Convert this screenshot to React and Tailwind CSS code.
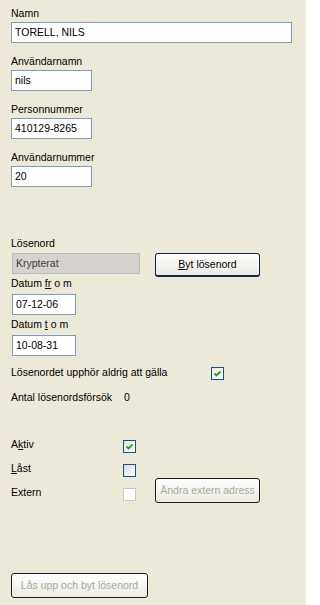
import React from 'react';

const Field = ({ value, width, disabled }) => (
  <div
    className={`flex items-center h-[21px] border px-[3px] ${width} ${
      disabled
        ? 'bg-[#d6d3ce] border-[#b2bcc4] text-[#3c3c3c]'
        : 'bg-white border-[#7f9db9] text-black'
    }`}
  >
    {value}
  </div>
);

const Label = ({ children, className = '' }) => (
  <div className={`h-[13px] text-black ${className}`}>{children}</div>
);

const Check = ({ checked, state = 'normal' }) => {
  const box =
    state === 'disabled'
      ? 'border-[#cac8bb] bg-white'
      : checked
      ? 'border-[#1c5180] bg-gradient-to-br from-[#e6e6e0] to-white'
      : 'border-[#1c5180] bg-gradient-to-br from-[#d6d9e0] to-white';
  return (
    <div className={`w-[13px] h-[13px] border flex items-center justify-center ${box}`}>
      {checked && (
        <svg width="9" height="9" viewBox="0 0 9 9">
          <path d="M1.5 4.5 L3.5 6.5 L7.5 2.5" fill="none" stroke="#21a121" strokeWidth="1.8" />
        </svg>
      )}
    </div>
  );
};

const XpButton = ({ children, width, disabled }) => (
  <div
    className={`flex items-center justify-center rounded-[3px] border bg-gradient-to-b from-white to-[#ebeae4] ${width} ${
      disabled
        ? 'border-[#1e1e1e] text-[#aca899]'
        : 'border-[#0f2a48] border-b-2 text-black'
    }`}
  >
    {children}
  </div>
);

export default function App() {
  return (
    <div className="h-[605px] w-[306px] bg-[#ece9d8] px-[11px] pt-[7px] pb-[7px] flex flex-col font-['Liberation_Sans',Arial,sans-serif] text-[10.5px] leading-[13px]">
      <Label>Namn</Label>
      <div className="mt-[2px]">
        <Field value="TORELL, NILS" width="w-[281px]" />
      </div>

      <Label className="mt-[12px]">Användarnamn</Label>
      <div className="mt-[2px]">
        <Field value="nils" width="w-[81px]" />
      </div>

      <Label className="mt-[12px]">Personnummer</Label>
      <div className="mt-[2px]">
        <Field value="410129-8265" width="w-[81px]" />
      </div>

      <Label className="mt-[12px]">Användarnummer</Label>
      <div className="mt-[2px]">
        <Field value="20" width="w-[81px]" />
      </div>

      <Label className="mt-[50px]">Lösenord</Label>
      <div className="mt-[3px] flex items-start gap-[15px] h-[23px]">
        <div className="pl-px">
          <Field value="Krypterat" width="w-[128px]" disabled />
        </div>
        <XpButton width="w-[105px] h-[24px]">
          <span>
            <span className="underline">B</span>yt lösenord
          </span>
        </XpButton>
      </div>

      <Label className="mt-[1px]">
        Datum <span className="underline">fr</span> o m
      </Label>
      <div className="mt-[4px] pl-px">
        <Field value="07-12-06" width="w-[64px]" />
      </div>

      <Label className="mt-[3px]">
        Datum <span className="underline">t</span> o m
      </Label>
      <div className="mt-[4px] pl-px">
        <Field value="10-08-31" width="w-[64px]" />
      </div>

      <div className="mt-[10px] flex items-start">
        <Label className="w-[200px]">
          Lösenordet upphör aldrig att <span className="underline">g</span>älla
        </Label>
        <div className="mt-px">
          <Check checked />
        </div>
      </div>

      <div className="mt-[11px] flex items-start">
        <Label className="w-[112px]">Antal lösenordsförsök</Label>
        <div className="pl-px">0</div>
      </div>

      <div className="mt-[34px] flex items-start">
        <div className="flex flex-col w-[125px]">
          <div className="flex items-start h-[24px]">
            <Label className="w-[112px]">
              A<span className="underline">k</span>tiv
            </Label>
            <div className="mt-[2px]">
              <Check checked />
            </div>
          </div>
          <div className="flex items-start h-[24px]">
            <Label className="w-[112px]">
              <span className="underline">L</span>åst
            </Label>
            <div className="mt-[2px]">
              <Check />
            </div>
          </div>
          <div className="flex items-start h-[24px]">
            <Label className="w-[112px]">Extern</Label>
            <div className="mt-[2px]">
              <Check state="disabled" />
            </div>
          </div>
        </div>
        <div className="mt-[40px] ml-[19px]">
          <XpButton width="w-[105px] h-[25px]" disabled>
            Ändra extern adress
          </XpButton>
        </div>
      </div>

      <div className="mt-auto">
        <XpButton width="w-[137px] h-[25px]" disabled>
          Lås upp och byt lösenord
        </XpButton>
      </div>
    </div>
  );
}
